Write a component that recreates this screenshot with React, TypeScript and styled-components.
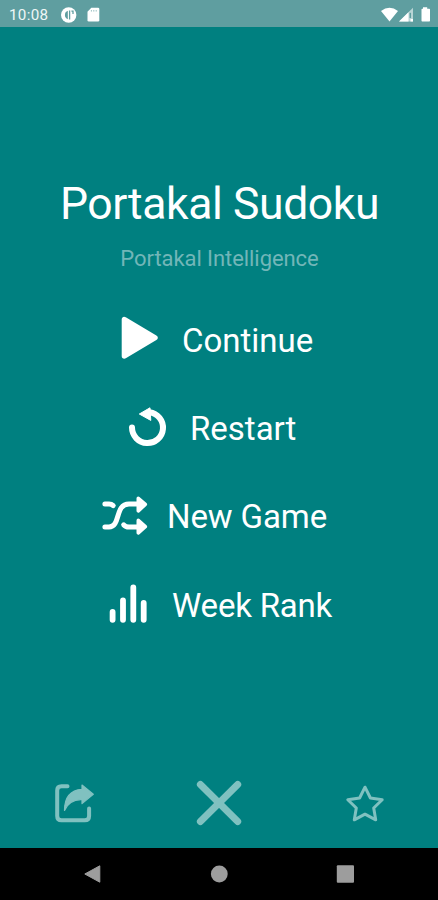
import React from "react";
import styled, { createGlobalStyle } from "styled-components";

const GlobalStyle = createGlobalStyle`
  * { box-sizing: border-box; }
  body { margin: 0; background: #008080; font-family: Roboto, "Liberation Sans", sans-serif; }
`;

const Screen = styled.div`
  width: 438px;
  height: 900px;
  display: flex;
  flex-direction: column;
  overflow: hidden;
  background: #008080;
  color: #fff;
`;

const StatusBar = styled.header`
  flex: none;
  height: 27px;
  padding: 2px 8px 0 9px;
  display: flex;
  align-items: center;
  justify-content: space-between;
  background: #5f9ea0;
`;

const StatusGroup = styled.div`
  display: flex;
  align-items: center;
`;

const Clock = styled.time`
  width: 52px;
  font-size: 15.2px;
  line-height: 20px;
  letter-spacing: 0.3px;
  color: #eef6f6;
`;

const Glyph = styled.svg`
  display: block;
  flex: none;
  overflow: visible;
`;

const Main = styled.main`
  flex: 1;
  display: flex;
  flex-direction: column;
`;

const Title = styled.h1`
  margin: 149px 0 0;
  height: 56px;
  padding-left: 1px;
  line-height: 56px;
  font-size: 44.5px;
  font-weight: 400;
  letter-spacing: -0.4px;
  text-align: center;
  white-space: nowrap;
`;

const Subtitle = styled.p`
  margin: 13px 0 0;
  height: 28px;
  padding-left: 1px;
  line-height: 28px;
  font-size: 22px;
  letter-spacing: -0.07px;
  text-align: center;
  color: #72b6b8;
`;

const Menu = styled.nav`
  margin-top: 23px;
  display: flex;
  flex-direction: column;
`;

const MenuItem = styled.button<{ $inset: number }>`
  height: 88.3px;
  padding: 0 0 0 ${(p) => p.$inset}px;
  display: flex;
  align-items: center;
  gap: 18px;
  border: 0;
  background: none;
  color: inherit;
  font: inherit;
`;

const MenuLabel = styled.span<{ $spacing: number }>`
  padding-top: 1px;
  font-size: 33px;
  line-height: 40px;
  letter-spacing: ${(p) => p.$spacing}px;
  white-space: nowrap;
`;

const Actions = styled.footer`
  margin-top: auto;
  height: 88px;
  display: grid;
  grid-template-columns: repeat(3, 146px);
  justify-items: center;
  align-items: center;
  color: #80c1c0;
`;

const ActionButton = styled.button`
  padding: 0;
  border: 0;
  background: none;
  color: inherit;
`;

const NavBar = styled.div`
  flex: none;
  height: 52px;
  display: flex;
  align-items: center;
  justify-content: space-between;
  padding: 0 83px;
  background: #000;
  color: #9d9d9d;
`;

const PlayIcon = () => (
  <Glyph width="48" height="48" viewBox="0 0 48 48">
    <path d="M8.4 3.5 V40 L39 21.7 Z" fill="#fff" stroke="#fff" strokeWidth="5.4" strokeLinejoin="round" />
  </Glyph>
);

const RestartIcon = () => (
  <Glyph width="48" height="48" viewBox="0 0 48 48">
    <path d="M8 23.6 A15.5 15.5 0 1 0 25.5 8.2" fill="none" stroke="#fff" strokeWidth="6" strokeLinecap="round" />
    <path d="M15.3 10 L26 3.8 L26.8 16.4 Z" fill="#fff" stroke="#fff" strokeWidth="1" strokeLinejoin="round" />
  </Glyph>
);

const ShuffleIcon = () => (
  <Glyph width="48" height="48" viewBox="0 0 48 48">
    <g fill="none" stroke="#fff" strokeWidth="5" strokeLinecap="round">
      <path d="M3.9 11 H8 Q10.5 11 12.2 12.6" />
      <path d="M3.9 34 H8 C20 34 13.5 11 28 11 H37" />
      <path d="M22.7 31.8 Q24.5 34 28 34 H37" />
    </g>
    <path d="M37.3 5.3 L44.3 11.4 L37.3 17.8 Z M37.3 27.4 L44.3 33.7 L37.3 39.8 Z" fill="#fff" stroke="#fff" strokeWidth="3.6" strokeLinejoin="round" />
  </Glyph>
);

const RankIcon = () => (
  <Glyph width="48" height="48" viewBox="0 0 48 48">
    <path d="M6.6 31 V38.8 M17 19.3 V38.8 M27.3 6.4 V38.8 M37.7 22 V38.8" stroke="#fff" strokeWidth="5.8" strokeLinecap="round" />
  </Glyph>
);

const items = [
  { label: "Continue", icon: <PlayIcon />, inset: 116, spacing: 0 },
  { label: "Restart", icon: <RestartIcon />, inset: 124, spacing: 0 },
  { label: "New Game", icon: <ShuffleIcon />, inset: 101, spacing: -0.1 },
  { label: "Week Rank", icon: <RankIcon />, inset: 106, spacing: -0.2 },
];

export default function App() {
  return (
    <>
      <GlobalStyle />
      <Screen>
        <StatusBar>
          <StatusGroup>
            <Clock>10:08</Clock>
            <Glyph width="40" height="16" viewBox="0 0 40 16">
              <circle cx="7.7" cy="8" r="7.7" fill="#fff" />
              <path d="M6.8 3.8 A4.5 4.5 0 0 0 6.8 12.2 Z" fill="#5f9ea0" />
              <path d="M8.6 3.6 V12.6 M10.4 4.2 H12 V7" fill="none" stroke="#5f9ea0" strokeWidth="1.3" />
              <path d="M30.3 .8 H37 Q38.3 .8 38.3 2 V13.2 Q38.3 14.5 37 14.5 H27.8 Q26.5 14.5 26.5 13.2 V4.8 Z" fill="#fff" />
              <path d="M30.4 3 V4.6 M32.8 3 V4.6 M35.2 3 V4.6" stroke="#9fc4c5" />
            </Glyph>
          </StatusGroup>
          <Glyph width="49" height="16" viewBox="0 0 49 16">
            <path d="M0 4 Q8.5 -2.5 17 4 L8.5 14.5 Z" fill="#fff" />
            <path d="M18 14.5 L32 .8 V14.5 Z" fill="#b9d5d6" />
            <path d="M18 14.5 L27.5 5.2 V14.5 Z M29.5 12 H32 V14.5 H29.5 Z" fill="#fff" />
            <path d="M29.3 5.8 V11" stroke="#5f9ea0" strokeWidth="1.5" />
            <path d="M42 .3 H46.2 V1.8 H48.3 Q49 1.8 49 2.5 V13.8 Q49 14.5 48.3 14.5 H41.2 Q40.5 14.5 40.5 13.8 V2.5 Q40.5 1.8 41.2 1.8 H42 Z" fill="#fff" />
          </Glyph>
        </StatusBar>
        <Main>
          <Title>Portakal Sudoku</Title>
          <Subtitle>Portakal Intelligence</Subtitle>
          <Menu>
            {items.map((item) => (
              <MenuItem key={item.label} $inset={item.inset}>
                {item.icon}
                <MenuLabel $spacing={item.spacing}>{item.label}</MenuLabel>
              </MenuItem>
            ))}
          </Menu>
          <Actions>
            <ActionButton aria-label="Share">
              <Glyph width="48" height="48" viewBox="49 780 48 48" fill="none">
                <path d="M67.5 786.3 H61.5 Q57.2 786.3 57.2 790.6 V816 Q57.2 820.3 61.5 820.3 H84.8 Q89.1 820.3 89.1 816 V808.6" stroke="currentColor" strokeWidth="4" strokeLinecap="round" />
                <path d="M82 785 L93.3 794.3 L82 803.6 V799.6 Q69.5 799 64.5 810.5 Q64.5 790.5 82 789.3 Z" fill="currentColor" stroke="currentColor" strokeWidth="1.2" strokeLinejoin="round" />
              </Glyph>
            </ActionButton>
            <ActionButton aria-label="Close">
              <Glyph width="48" height="48" viewBox="195.3 780 48 48">
                <path d="M200.7 784.5 L238 821.5 M238 784.5 L200.7 821.5" stroke="currentColor" strokeWidth="7" strokeLinecap="round" />
              </Glyph>
            </ActionButton>
            <ActionButton aria-label="Favorite">
              <Glyph width="48" height="48" viewBox="341 780 48 48">
                <path d="M365 787.2 L370.4 798 L382.2 799.7 L373.7 808 L375.7 819.8 L365 814.2 L354.3 819.8 L356.3 808 L347.8 799.7 L359.6 798 Z" fill="none" stroke="currentColor" strokeWidth="3" strokeLinejoin="round" />
              </Glyph>
            </ActionButton>
          </Actions>
        </Main>
        <NavBar>
          <Glyph width="18" height="18" viewBox="0 0 18 18">
            <path d="M1.8 9 L16.8 .8 V17.2 Z" fill="currentColor" stroke="currentColor" strokeLinejoin="round" />
          </Glyph>
          <Glyph width="18" height="18" viewBox="0 0 18 18">
            <circle cx="9.3" cy="9" r="8.4" fill="currentColor" />
          </Glyph>
          <Glyph width="18" height="18" viewBox="0 0 18 18">
            <rect x="-.2" y=".3" width="17.2" height="17.4" rx="1" fill="currentColor" />
          </Glyph>
        </NavBar>
      </Screen>
    </>
  );
}
